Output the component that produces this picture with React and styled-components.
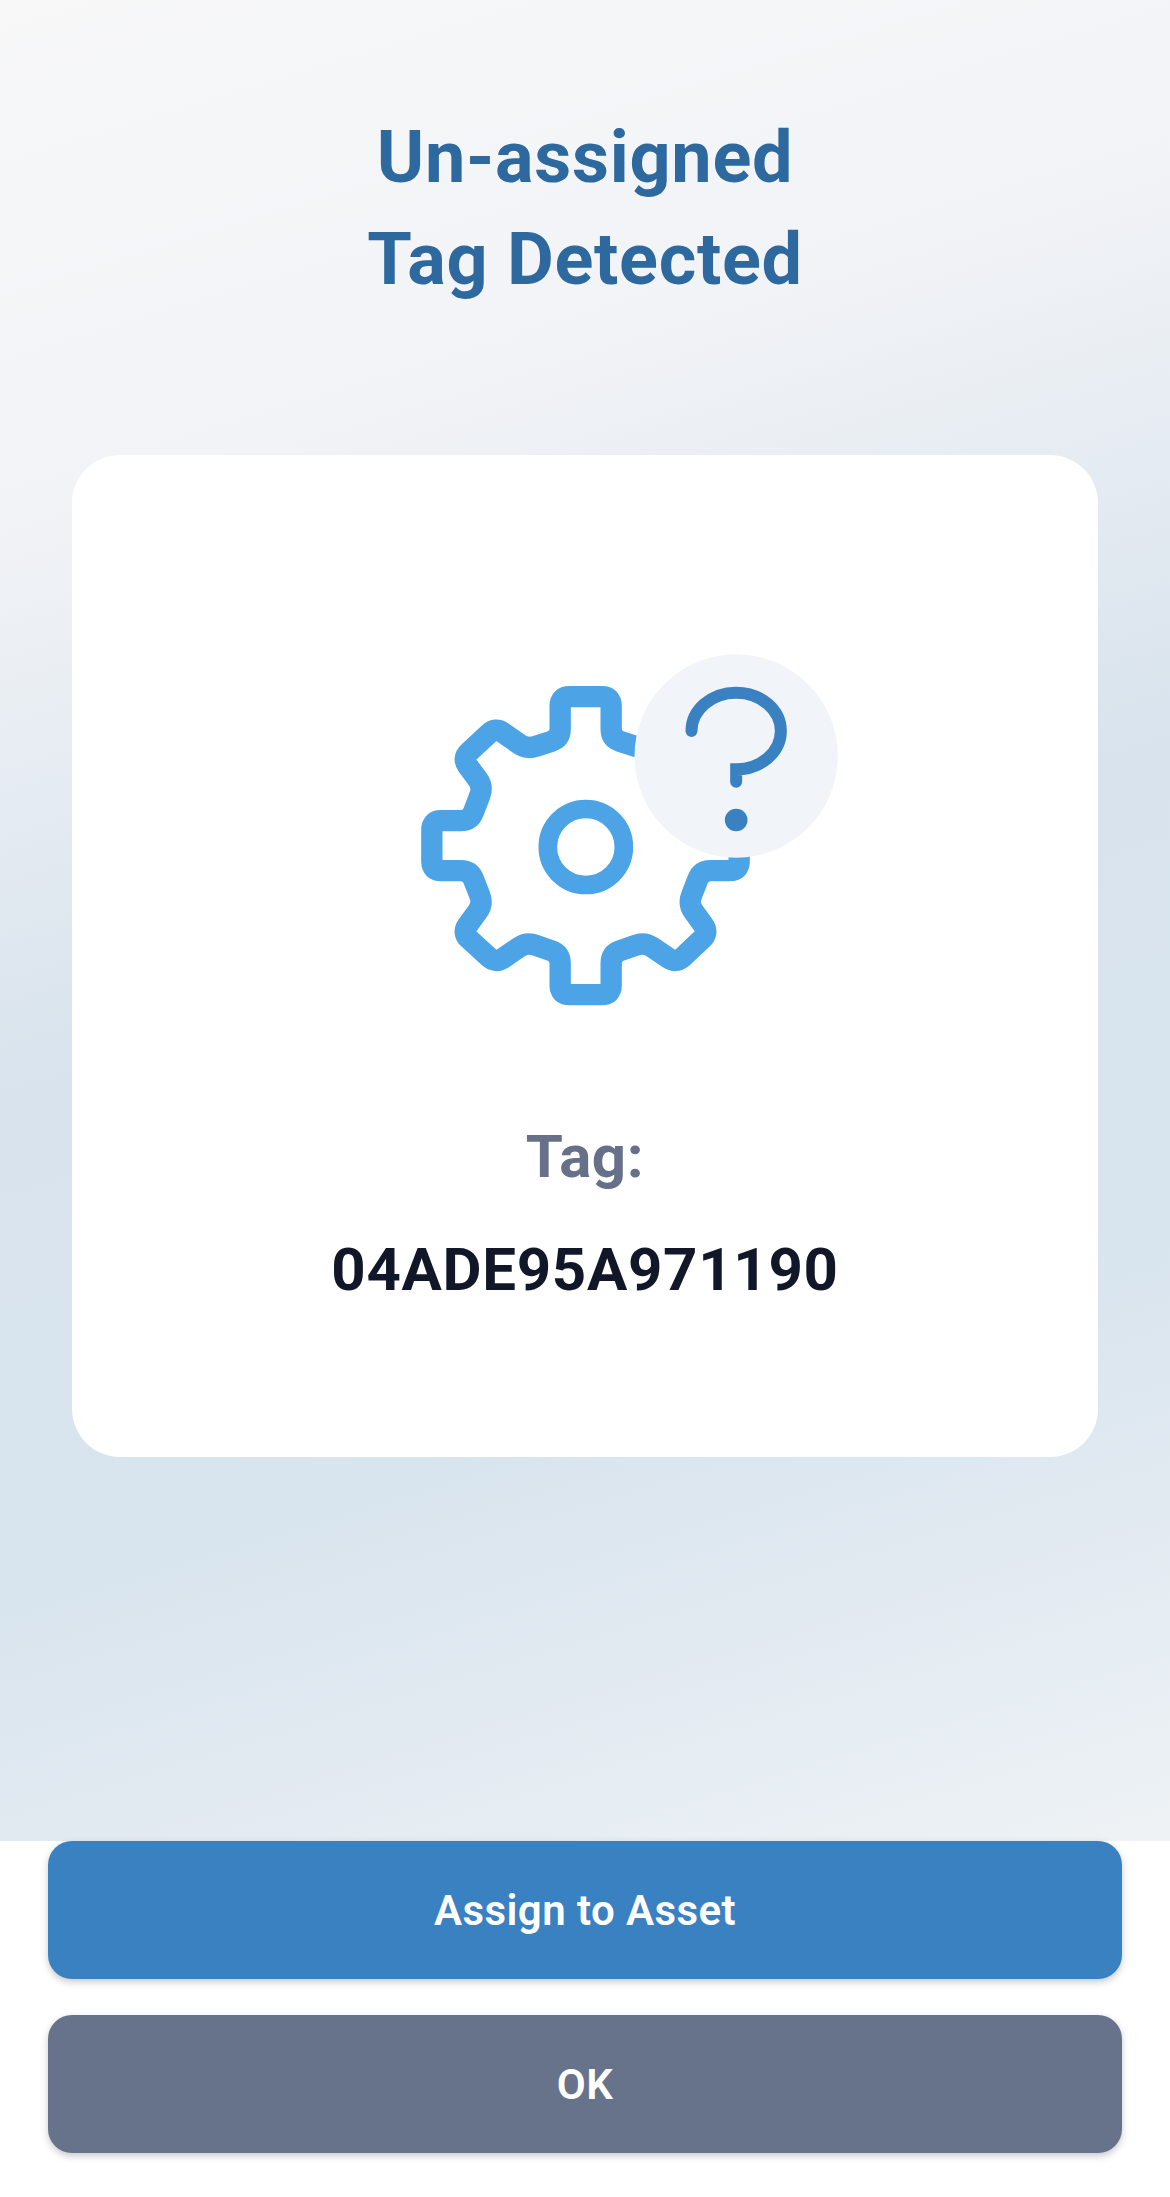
import React from "react";
import styled, { createGlobalStyle } from "styled-components";

const GlobalStyle = createGlobalStyle`
  html, body {
    margin: 0;
    padding: 0;
    background: #ffffff;
    font-family: Roboto, "Liberation Sans", sans-serif;
  }
`;

const Page = styled.div`
  display: flex;
  flex-direction: column;
  width: 1170px;
  height: 2197px;
  overflow: hidden;
`;
const Content = styled.main`
  box-sizing: border-box;
  height: 1841px;
  padding: 107px 72px 0;
  background: linear-gradient(163deg, #f8f8f9 0%, #f1f3f6 24%, #d8e3ed 50%, #d8e4ee 72%, #eef2f5 100%);
`;
const Title = styled.h1`
  margin: 0 0 144px;
  text-align: center;
  font-size: 72px;
  line-height: 102px;
  font-weight: 700;
  letter-spacing: 0.72px;
  color: #2d689f;
`;
const Card = styled.section`
  box-sizing: border-box;
  height: 1002px;
  padding-top: 175px;
  display: flex;
  flex-direction: column;
  align-items: center;
  background: #ffffff;
  border-radius: 48px;
`;
const TagLabel = styled.div`
  margin-top: 88px;
  font-size: 60px;
  line-height: 78px;
  font-weight: 700;
  letter-spacing: 0.6px;
  color: #667189;
`;
const TagValue = styled.div`
  margin-top: 35px;
  font-size: 60px;
  line-height: 78px;
  font-weight: 700;
  letter-spacing: 0.7px;
  color: #111729;
`;
const Actions = styled.footer`
  display: flex;
  flex-direction: column;
  gap: 36px;
  padding: 0 48px;
`;
const ActionButton = styled.button`
  height: 138px;
  border: none;
  border-radius: 24px;
  background: ${(p) => p.$bg};
  color: #ffffff;
  font-family: inherit;
  font-size: 42px;
  font-weight: 600;
  letter-spacing: 0.42px;
  box-shadow: 0 3px 7px rgba(30, 41, 59, 0.25);
`;

// centre line of the gear, in the drawing's units, rounded at each corner below
const gearPoints = [
  [482, 200], [635, 200], [635, 325], [735, 358], [830, 292], [928, 385], [866, 470],
  [905, 572], [1019, 572], [1019, 722], [905, 722], [866, 822], [928, 908], [830, 1000],
  [735, 936], [635, 972], [635, 1094], [482, 1094], [482, 972], [382, 936], [288, 1000],
  [188, 908], [251, 822], [212, 722], [97, 722], [97, 572], [212, 572], [251, 470],
  [188, 385], [288, 292], [382, 358], [482, 325],
];

function roundedPath(points, radius) {
  const n = points.length;
  let d = "";
  points.forEach((pt, i) => {
    const prev = points[(i + n - 1) % n];
    const next = points[(i + 1) % n];
    const toward = (to) => {
      const dx = to[0] - pt[0];
      const dy = to[1] - pt[1];
      const r = Math.min(radius, Math.hypot(dx, dy) / 2) / Math.hypot(dx, dy);
      return `${pt[0] + dx * r} ${pt[1] + dy * r}`;
    };
    d += `${i === 0 ? "M" : "L"}${toward(prev)} Q${pt[0]} ${pt[1]} ${toward(next)} `;
  });
  return d + "Z";
}

function GearQuestion() {
  return (
    <svg width="507" height="400" viewBox="-202 0 1520 1200" fill="none">
      <path d={roundedPath(gearPoints, 28)} stroke="#4ca3e5" strokeWidth="64" strokeLinejoin="round" />
      <circle cx="559" cy="651" r="114" stroke="#4ca3e5" strokeWidth="56" />
      <circle cx="1010" cy="378" r="305" fill="#f1f5f9" />
      <path
        d="M876 303A134 115 0 1 1 1144 303A134 115 0 0 1 1010 418V455"
        stroke="#3a81c1"
        strokeWidth="36"
        strokeLinecap="round"
      />
      <circle cx="1010" cy="570" r="34" fill="#3a81c1" />
    </svg>
  );
}

export default function App() {
  return (
    <Page>
      <GlobalStyle />
      <Content>
        <Title>
          Un-assigned
          <br />
          Tag Detected
        </Title>
        <Card>
          <GearQuestion />
          <TagLabel>Tag:</TagLabel>
          <TagValue>04ADE95A971190</TagValue>
        </Card>
      </Content>
      <Actions>
        <ActionButton $bg="#3a81c1">Assign to Asset</ActionButton>
        <ActionButton $bg="#67738a">OK</ActionButton>
      </Actions>
    </Page>
  );
}
